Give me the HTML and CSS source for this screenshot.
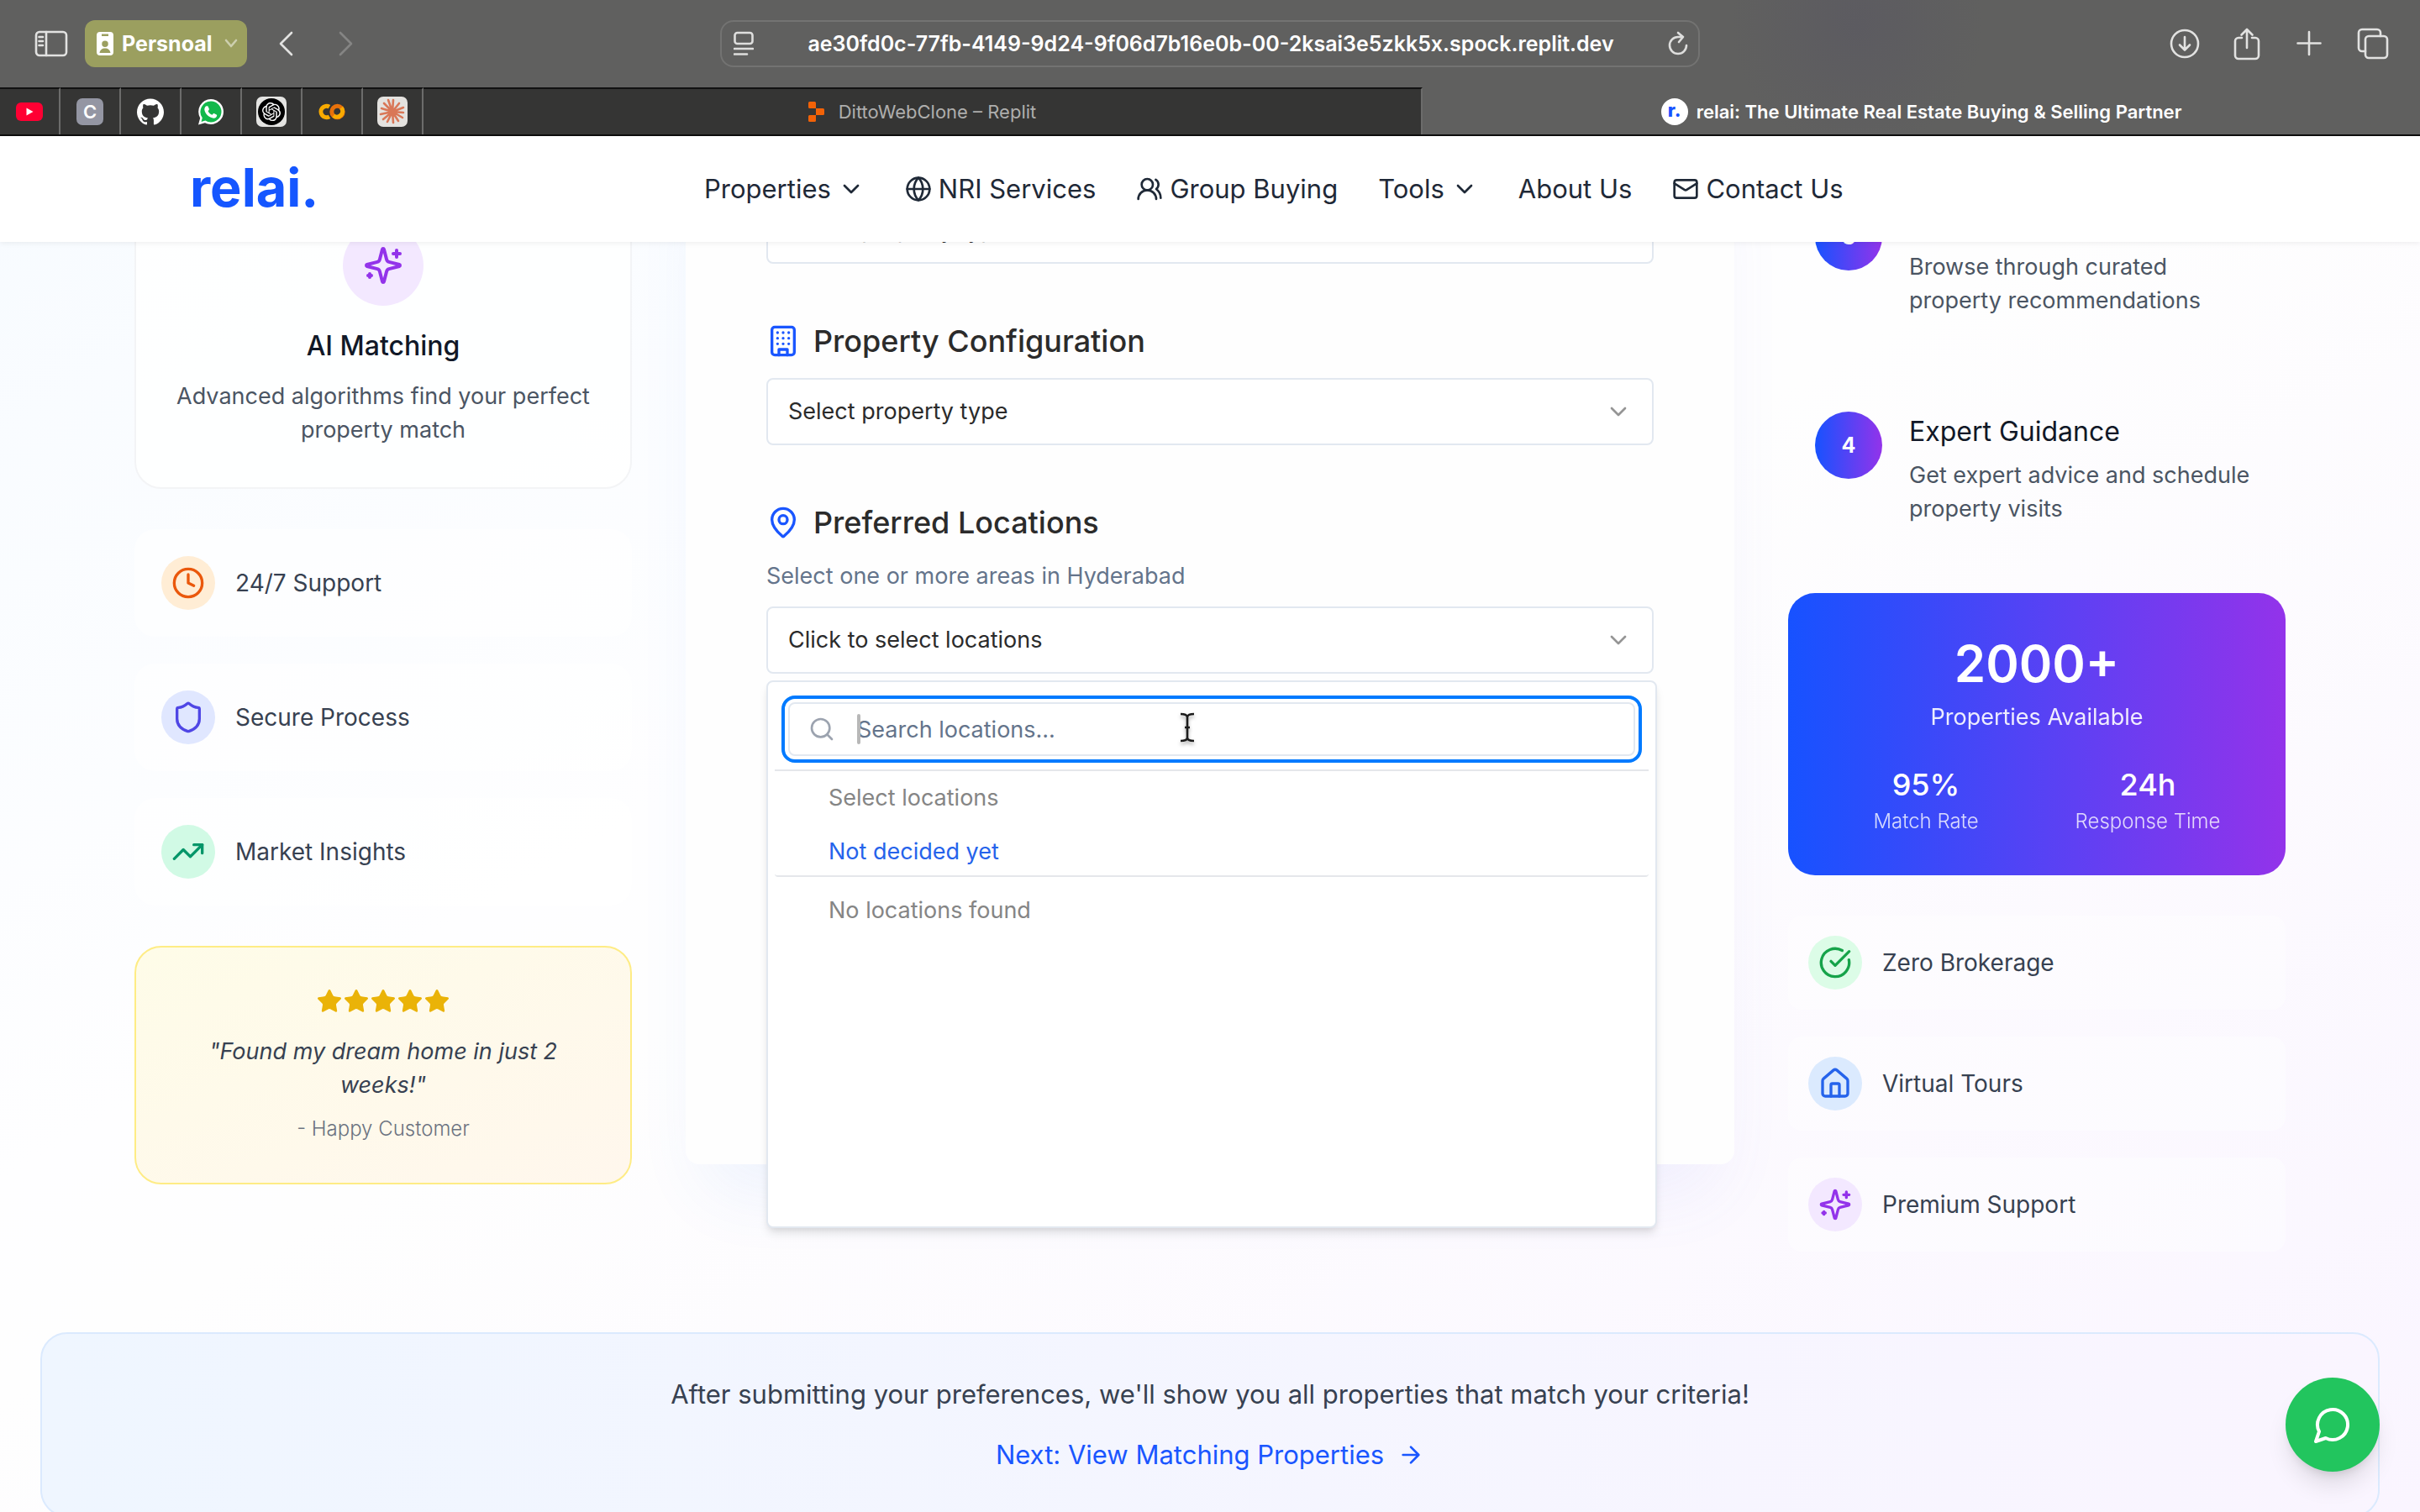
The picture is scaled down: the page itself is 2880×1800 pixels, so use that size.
FILE: index.html
```html
<!DOCTYPE html>
<html lang="en">
<head>
<meta charset="utf-8">
<title>relai: The Ultimate Real Estate Buying &amp; Selling Partner</title>
<link rel="stylesheet" href="styles.css">
</head>
<body>
<svg class="sprite" aria-hidden="true">
  <symbol id="chevron" viewBox="0 0 24 24"><path d="m6 9 6 6 6-6"/></symbol>
  <symbol id="sparkles" viewBox="0 0 24 24"><path d="M9.937 15.5A2 2 0 0 0 8.5 14.063l-6.135-1.582a.5.5 0 0 1 0-.962L8.5 9.936A2 2 0 0 0 9.937 8.5l1.582-6.135a.5.5 0 0 1 .963 0L14.063 8.5A2 2 0 0 0 15.5 9.937l6.135 1.581a.5.5 0 0 1 0 .964L15.5 14.063a2 2 0 0 0-1.437 1.437l-1.582 6.135a.5.5 0 0 1-.963 0z"/><path d="M20 3v4M22 5h-4M4 17v2M5 18H3"/></symbol>
  <symbol id="star" viewBox="0 0 24 24"><path d="M11.525 2.295a.53.53 0 0 1 .95 0l2.31 4.679a2.123 2.123 0 0 0 1.595 1.16l5.166.756a.53.53 0 0 1 .294.904l-3.736 3.638a2.123 2.123 0 0 0-.611 1.878l.882 5.14a.53.53 0 0 1-.771.56l-4.618-2.428a2.122 2.122 0 0 0-1.973 0L6.396 21.01a.53.53 0 0 1-.77-.56l.881-5.139a2.122 2.122 0 0 0-.611-1.879L2.16 9.795a.53.53 0 0 1 .294-.906l5.165-.755a2.122 2.122 0 0 0 1.597-1.16z"/></symbol>
</svg>

<div class="browser">
  <div class="toolbar">
    <div class="tools-left">
      <button class="tool" aria-label="Sidebar"><svg width="40" height="32" viewBox="0 0 40 32"><rect x="2" y="2" width="36" height="28" rx="4"/><path d="M14 2v28M5.500 8h4.500M5.500 13h4.500M5.500 18h4.500"/></svg></button>
      <button class="profile"><svg width="20" height="28" viewBox="0 0 20 28"><path fill="#fff" fill-rule="evenodd" d="M4 0h12a4 4 0 0 1 4 4v20a4 4 0 0 1-4 4H4a4 4 0 0 1-4-4V4a4 4 0 0 1 4-4zM6 2.500v2.500h8V2.500zM10 10.500a3.500 3.500 0 1 0 0 7.500 3.500 3.500 0 0 0 0-7.500zM3.500 25h13c-.5-3.500-3-5.500-6.500-5.500S4 21.500 3.500 25z"/></svg><span>Persnoal</span><svg class="profile-arrow" width="16" height="12" viewBox="0 0 16 12"><path d="m2 2 6 7 6-7"/></svg></button>
      <button class="tool back" aria-label="Back"><svg width="20" height="32" viewBox="0 0 20 32"><path d="M17 3 4 16l13 13"/></svg></button>
      <button class="tool forward" aria-label="Forward"><svg width="20" height="32" viewBox="0 0 20 32"><path d="m3 3 13 13L3 29"/></svg></button>
    </div>
    <div class="address">
      <svg width="24" height="30" viewBox="0 0 24 30"><rect x="1.500" y="2" width="21" height="13" rx="3"/><path d="M1 21h22M1 27.500h15"/></svg>
      <span>ae30fd0c-77fb-4149-9d24-9f06d7b16e0b-00-2ksai3e5zkk5x.spock.replit.dev</span>
      <svg width="24" height="32" viewBox="0 0 24 32"><path d="M22 18a10 10 0 1 1-10-10h5M12 3l6 5-5 6"/></svg>
    </div>
    <div class="tools-right">
      <button class="tool" aria-label="Downloads"><svg width="36" height="40" viewBox="0 0 36 40"><circle cx="18" cy="20" r="16"/><path d="M18 12v15M12 21.500l6 6 6-6"/></svg></button>
      <button class="tool" aria-label="Share"><svg width="36" height="40" viewBox="0 0 36 40"><path d="M12 13H8a4 4 0 0 0-4 4v17a4 4 0 0 0 4 4h20a4 4 0 0 0 4-4V17a4 4 0 0 0-4-4h-4M18 25V3M11.500 9.500 18 3l6.500 6.500"/></svg></button>
      <button class="tool" aria-label="New tab"><svg width="36" height="40" viewBox="0 0 36 40"><path d="M18 6v27M4.500 19.500h27"/></svg></button>
      <button class="tool" aria-label="Tab overview"><svg width="40" height="40" viewBox="0 0 40 40"><rect x="11" y="11" width="26" height="26" rx="4"/><path d="M11 29H7a4 4 0 0 1-4-4V7a4 4 0 0 1 4-4h18a4 4 0 0 1 4 4v4"/></svg></button>
    </div>
  </div>
  <div class="tabs">
    <div class="pinned"><svg width="32" height="24" viewBox="0 0 32 24"><rect width="32" height="22" y="1" rx="6" fill="#ff0033"/><path d="M12.500 7.500v9l8-4.500z" fill="#fff"/></svg></div>
    <div class="pinned"><span class="letter">C</span></div>
    <div class="pinned"><svg width="32" height="32" viewBox="0 0 24 24"><path fill="#fff" d="M12 .297c-6.630 0-12 5.373-12 12 0 5.303 3.438 9.800 8.205 11.385.6.113.82-.258.82-.577 0-.285-.01-1.040-.015-2.040-3.338.724-4.042-1.610-4.042-1.610C4.422 18.070 3.633 17.700 3.633 17.700c-1.087-.744.084-.729.084-.729 1.205.084 1.838 1.236 1.838 1.236 1.070 1.835 2.809 1.305 3.495.998.108-.776.417-1.305.76-1.605-2.665-.3-5.466-1.332-5.466-5.930 0-1.310.465-2.380 1.235-3.220-.135-.303-.54-1.523.105-3.176 0 0 1.005-.322 3.300 1.230.96-.267 1.980-.399 3-.405 1.020.006 2.040.138 3 .405 2.280-1.552 3.285-1.230 3.285-1.230.645 1.653.24 2.873.12 3.176.765.84 1.230 1.910 1.230 3.220 0 4.610-2.805 5.625-5.475 5.920.42.36.81 1.096.81 2.220 0 1.606-.015 2.896-.015 3.286 0 .315.21.69.825.57C20.565 22.092 24 17.592 24 12.297c0-6.627-5.373-12-12-12"/></svg></div>
    <div class="pinned"><svg width="32" height="32" viewBox="0 0 32 32"><path fill="#fff" d="M16 1a15 15 0 0 1 0 30c-2.500 0-4.900-.6-7-1.700L1 31.500l2.200-8A15 15 0 0 1 16 1z"/><path fill="#12b84b" d="M16 3.500a12.500 12.500 0 0 1 0 25c-2.400 0-4.700-.7-6.600-1.900l-4.900 1.400 1.300-4.800A12.500 12.500 0 0 1 16 3.500z"/><path fill="#fff" d="M11.500 9.200c.5 0 .9 0 1.200.8l1.200 2.800c.2.600-.1 1-1.300 2.500 1 2 2.600 3.500 4.900 4.500 1.200-1.500 1.600-2 2.300-1.700l2.800 1.400c.6.300.6.700.5 1.300-.4 1.900-2 3-3.800 2.900-5.500-.5-10.500-5.500-11-10.200-.1-1.900 1-3.800 2.300-4.300z"/></svg></div>
    <div class="pinned"><svg width="36" height="36" viewBox="0 0 36 36"><rect width="36" height="36" rx="7" fill="#e4e4e2"/><circle cx="18" cy="18" r="16" fill="#000"/><g transform="translate(7 7) scale(.92)"><path fill="#fff" d="M22.282 9.821a5.985 5.985 0 0 0-.516-4.911 6.046 6.046 0 0 0-6.510-2.900A6.065 6.065 0 0 0 4.981 4.182a5.985 5.985 0 0 0-3.998 2.900 6.046 6.046 0 0 0 .743 7.097 5.980 5.980 0 0 0 .511 4.911 6.051 6.051 0 0 0 6.515 2.900A5.985 5.985 0 0 0 13.260 24a6.056 6.056 0 0 0 5.772-4.206 5.989 5.989 0 0 0 3.998-2.900 6.056 6.056 0 0 0-.748-7.073zm-9.022 12.608a4.476 4.476 0 0 1-2.876-1.041l.142-.08 4.778-2.758a.795.795 0 0 0 .393-.681v-6.737l2.020 1.169a.071.071 0 0 1 .038.052v5.583a4.504 4.504 0 0 1-4.495 4.494zm-9.661-4.125a4.471 4.471 0 0 1-.535-3.014l.142.085 4.783 2.758a.771.771 0 0 0 .781 0l5.843-3.369v2.332a.08.08 0 0 1-.033.062L9.740 19.950a4.499 4.499 0 0 1-6.141-1.646zM2.341 7.896a4.485 4.485 0 0 1 2.366-1.973V11.600a.766.766 0 0 0 .388.677l5.814 3.354-2.020 1.169a.076.076 0 0 1-.071 0l-4.830-2.787A4.504 4.504 0 0 1 2.341 7.872zm16.596 3.856L13.104 8.364 15.119 7.200a.076.076 0 0 1 .071 0l4.830 2.791a4.494 4.494 0 0 1-.677 8.104v-5.677a.79.79 0 0 0-.407-.667zm2.011-3.023l-.142-.085-4.774-2.782a.776.776 0 0 0-.785 0L9.409 9.230V6.897a.066.066 0 0 1 .028-.062l4.830-2.787a4.499 4.499 0 0 1 6.680 4.660zM8.307 12.863l-2.020-1.164a.08.08 0 0 1-.038-.057V6.074a4.499 4.499 0 0 1 7.376-3.454l-.142.081L8.704 5.459a.795.795 0 0 0-.393.681zm1.098-2.365l2.602-1.500 2.607 1.500v2.999l-2.597 1.500-2.607-1.500z"/></g></svg></div>
    <div class="pinned"><svg width="32" height="20" viewBox="0 0 32 20" fill="none" stroke-width="5"><path stroke="#f9ab00" d="M13 4.200A6.700 6.700 0 1 0 13 15.800"/><circle stroke="#e8710a" cx="22.500" cy="10" r="6.700"/><path stroke="#f9ab00" d="M27.200 5.300a6.700 6.700 0 0 1-9.400 9.400"/></svg></div>
    <div class="pinned"><svg width="36" height="36" viewBox="0 0 36 36"><rect width="36" height="36" rx="7" fill="#e4e2df"/><path stroke="#d97757" stroke-width="2.600" stroke-linecap="round" d="M18 18 19 4M18 18l8-10M18 18l13-5M18 18l13 1M18 18l12 7M18 18l7 11M18 18l1 13M18 18l-6 12M18 18 7 27M18 18 4 21M18 18 5 14M18 18 8 8M18 18 13 4"/></svg></div>
    <div class="tab"><svg width="20" height="24" viewBox="0 0 20 24" fill="#f26207"><path d="M1.500 0h6A1.500 1.500 0 0 1 9 1.500V8H1.500A1.500 1.500 0 0 1 0 6.500v-5A1.500 1.500 0 0 1 1.500 0zM9 8h8.500A1.500 1.500 0 0 1 19 9.500v5a1.500 1.500 0 0 1-1.500 1.500H9zM1.500 16H9v6.500A1.500 1.500 0 0 1 7.500 24h-6A1.500 1.500 0 0 1 0 22.500v-5A1.500 1.500 0 0 1 1.500 16z"/></svg><span>DittoWebClone – Replit</span></div>
    <div class="tab active"><span class="favicon">r.</span><span>relai: The Ultimate Real Estate Buying &amp; Selling Partner</span></div>
  </div>
</div>

<div class="page">
  <header class="site-header">
    <a class="logo" href="#">relai.</a>
    <nav class="nav">
      <a href="#">Properties <svg class="icon"><use href="#chevron"/></svg></a>
      <a href="#"><svg class="icon" viewBox="0 0 24 24"><circle cx="12" cy="12" r="10"/><path d="M12 2a14.500 14.500 0 0 0 0 20 14.500 14.500 0 0 0 0-20M2 12h20"/></svg> NRI Services</a>
      <a href="#"><svg class="icon" viewBox="0 0 24 24"><path d="M18 21a8 8 0 0 0-16 0"/><circle cx="10" cy="8" r="5"/><path d="M22 20c0-3.370-2-6.500-4-8a5 5 0 0 0-.450-8.300"/></svg> Group Buying</a>
      <a href="#">Tools <svg class="icon"><use href="#chevron"/></svg></a>
      <a href="#">About Us</a>
      <a href="#"><svg class="icon" viewBox="0 0 24 24"><rect width="20" height="16" x="2" y="4" rx="2"/><path d="m22 7-8.970 5.700a1.940 1.940 0 0 1-2.060 0L2 7"/></svg> Contact Us</a>
    </nav>
  </header>

  <main class="content">
    <div class="columns">
      <aside class="side side-left">
        <section class="feature">
          <div class="badge badge-lg purple"><svg class="icon"><use href="#sparkles"/></svg></div>
          <h3>AI Matching</h3>
          <p>Advanced algorithms find your perfect property match</p>
        </section>
        <ul class="perks">
          <li><span class="badge orange"><svg class="icon" viewBox="0 0 24 24"><circle cx="12" cy="12" r="10"/><path d="M12 6v6l4 2"/></svg></span>24/7 Support</li>
          <li><span class="badge indigo"><svg class="icon" viewBox="0 0 24 24"><path d="M20 13c0 5-3.500 7.500-7.660 8.950a1 1 0 0 1-.670-.010C7.500 20.500 4 18 4 13V6a1 1 0 0 1 1-1c2 0 4.500-1.200 6.240-2.720a1.170 1.170 0 0 1 1.520 0C14.510 3.810 17 5 19 5a1 1 0 0 1 1 1z"/></svg></span>Secure Process</li>
          <li><span class="badge emerald"><svg class="icon" viewBox="0 0 24 24"><path d="m22 7-8.500 8.500-5-5L2 17"/><path d="M16 7h6v6"/></svg></span>Market Insights</li>
        </ul>
        <figure class="quote">
          <div class="stars"><svg><use href="#star"/></svg><svg><use href="#star"/></svg><svg><use href="#star"/></svg><svg><use href="#star"/></svg><svg><use href="#star"/></svg></div>
          <blockquote>"Found my dream home in just 2 weeks!"</blockquote>
          <figcaption>- Happy Customer</figcaption>
        </figure>
      </aside>

      <form class="form-card">
        <div class="field">
          <div class="select"><select aria-label="Property type"><option>Select property type</option></select><svg class="icon"><use href="#chevron"/></svg></div>
        </div>
        <div class="field">
          <label class="field-title" for="configuration"><svg class="icon" viewBox="0 0 24 24"><rect width="16" height="20" x="4" y="2" rx="2"/><path d="M9 22v-4h6v4M8 6h.010M16 6h.010M12 6h.010M12 10h.010M12 14h.010M16 10h.010M16 14h.010M8 10h.010M8 14h.010"/></svg>Property Configuration</label>
          <div class="select"><select id="configuration"><option>Select property type</option></select><svg class="icon"><use href="#chevron"/></svg></div>
        </div>
        <div class="field">
          <label class="field-title" for="locations"><svg class="icon" viewBox="0 0 24 24"><path d="M20 10c0 4.993-5.539 10.193-7.399 11.799a1 1 0 0 1-1.202 0C9.539 20.193 4 14.993 4 10a8 8 0 0 1 16 0"/><circle cx="12" cy="10" r="3"/></svg>Preferred Locations</label>
          <p class="hint">Select one or more areas in Hyderabad</p>
          <div class="select">
            <select id="locations"><option>Click to select locations</option></select><svg class="icon"><use href="#chevron"/></svg>
            <div class="menu">
              <div class="search">
                <svg class="icon" viewBox="0 0 24 24"><circle cx="11" cy="11" r="8"/><path d="m21 21-4.300-4.300"/></svg>
                <input type="text" placeholder="Search locations..." aria-label="Search locations">
                <span class="caret"></span>
                <svg class="pointer" width="20" height="36" viewBox="0 0 20 36"><path d="M2 2c5 0 8 1 8 4 0-3 3-4 8-4M10 5v26M2 34c5 0 8-1 8-4 0 3 3 4 8 4M7 18h6"/></svg>
              </div>
              <ul class="options">
                <li>Select locations</li>
                <li class="undecided">Not decided yet</li>
                <li class="none">No locations found</li>
              </ul>
            </div>
          </div>
        </div>
      </form>

      <aside class="side">
        <ol class="steps">
          <li><span class="number">3</span><div><h3>Browse Matches</h3><p>Browse through curated property recommendations</p></div></li>
          <li><span class="number">4</span><div><h3>Expert Guidance</h3><p>Get expert advice and schedule property visits</p></div></li>
        </ol>
        <section class="stats">
          <strong>2000+</strong>
          <p>Properties Available</p>
          <dl>
            <div><dd>95%</dd><dt>Match Rate</dt></div>
            <div><dd>24h</dd><dt>Response Time</dt></div>
          </dl>
        </section>
        <ul class="perks compact">
          <li><span class="badge green"><svg class="icon" viewBox="0 0 24 24"><path d="M21.801 10A10 10 0 1 1 17 3.335"/><path d="m9 11 3 3L22 4"/></svg></span>Zero Brokerage</li>
          <li><span class="badge blue"><svg class="icon" viewBox="0 0 24 24"><path d="M15 21v-8a1 1 0 0 0-1-1h-4a1 1 0 0 0-1 1v8"/><path d="M3 10a2 2 0 0 1 .709-1.528l7-5.999a2 2 0 0 1 2.582 0l7 5.999A2 2 0 0 1 21 10v9a2 2 0 0 1-2 2H5a2 2 0 0 1-2-2z"/></svg></span>Virtual Tours</li>
          <li><span class="badge purple"><svg class="icon"><use href="#sparkles"/></svg></span>Premium Support</li>
        </ul>
      </aside>
    </div>

    <section class="next">
      <p>After submitting your preferences, we'll show you all properties that match your criteria!</p>
      <a href="#">Next: View Matching Properties <svg class="icon" viewBox="0 0 24 24"><path d="M5 12h14M12 5l7 7-7 7"/></svg></a>
    </section>
  </main>
  <button class="chat" aria-label="Chat"><svg class="icon" viewBox="0 0 24 24"><path d="M7.900 20A9 9 0 1 0 4 16.100L2 22Z"/></svg></button>
</div>
</body>
</html>
```
FILE: styles.css
```css
* { box-sizing: border-box; margin: 0; padding: 0; }
body {
  display: flex;
  flex-direction: column;
  height: 100vh;
  overflow: hidden;
  font-family: Inter, "Noto Sans", sans-serif;
  font-size: 27px;
  font-weight: 400;
  line-height: 40px;
  color: #374151;
}
ul, ol { list-style: none; }
a { color: inherit; text-decoration: none; }
button, input, select { font: inherit; color: inherit; border: 0; background: none; }
.sprite { position: absolute; width: 0; height: 0; }
.icon {
  width: 32px;
  height: 32px;
  flex: none;
  fill: none;
  stroke: currentColor;
  stroke-width: 2;
  stroke-linecap: round;
  stroke-linejoin: round;
}

/* Browser chrome */
.browser {
  flex: none;
  border-bottom: 2px solid #0c0c0c;
  background: radial-gradient(circle at 2210px 30px, #58566280 0, #58566200 150px), #60605f;
}
.toolbar {
  display: grid;
  grid-template-columns: 1fr 1166px 1fr;
  align-items: center;
  height: 104px;
  color: #e2e2e1;
}
.toolbar svg { display: block; fill: none; stroke: currentColor; stroke-width: 2.6; stroke-linecap: round; stroke-linejoin: round; }
.tools-left { display: flex; align-items: center; padding-left: 41px; }
.profile {
  display: flex;
  align-items: center;
  gap: 10px;
  height: 56px;
  width: 193px;
  margin: 0 36px 0 20px;
  padding-left: 14px;
  border-radius: 12px;
  background: #9b9f5f;
  color: #fff;
  font-size: 25px;
  font-weight: 700;
}
.toolbar .profile svg { stroke: none; }
.toolbar .profile .profile-arrow { stroke: #cdcfae; margin-left: 4px; }
.back { margin-right: 52px; }
.forward { color: #858584; }
.address {
  display: flex;
  align-items: center;
  justify-content: space-between;
  height: 56px;
  padding: 0 12px 0 14px;
  border: 2px solid #737372;
  border-radius: 16px;
  color: #fff;
  font-size: 25px;
  font-weight: 600;
}
.address svg { color: #dededd; }
.tools-right { display: flex; justify-content: flex-end; gap: 38px; padding-right: 36px; }
.tabs { display: flex; height: 56px; font-size: 22px; }
.pinned, .tab {
  display: flex;
  align-items: center;
  justify-content: center;
  border-top: 2px solid #111;
  border-right: 2px solid #6c6c6b;
  background: #353534;
}
.pinned { width: 72px; flex: none; }
.tab { flex: 1; color: #aeaead; gap: 16px; }
.tab.active { border-color: transparent; border-right: 0; background: none; color: #fff; font-weight: 600; gap: 10px; }
.letter {
  width: 32px;
  height: 32px;
  border-radius: 7px;
  background: #9496a3;
  color: #fff;
  font-size: 22px;
  font-weight: 600;
  line-height: 32px;
  text-align: center;
}
.favicon {
  width: 32px;
  height: 32px;
  border-radius: 50%;
  background: #fff;
  color: #1752ff;
  font-size: 22px;
  font-weight: 800;
  line-height: 28px;
  text-align: center;
}

/* Page */
.page {
  position: relative;
  flex: 1;
  overflow: hidden;
  background: linear-gradient(to bottom right, #f7fbff 0%, #fefeff 38%, #fefefe 46%, #faf5ff 100%);
}
.site-header {
  position: relative;
  z-index: 5;
  display: grid;
  grid-template-columns: 612px 1fr;
  align-items: center;
  height: 126px;
  padding-left: 226px;
  background: #fff;
  box-shadow: 0 2px 6px #0000000f;
}
.logo { padding-bottom: 4px; color: #1556ff; font-size: 63px; font-weight: 700; line-height: 80px; }
.nav { display: flex; gap: 48px; color: #1f2937; font-size: 31px; line-height: 48px; }
.nav a { display: flex; align-items: center; gap: 8px; }
.content { margin-top: -78px; }
.columns {
  display: grid;
  grid-template-columns: minmax(0, 592fr) minmax(0, 1248fr) minmax(0, 592fr);
  gap: 64px;
  padding: 0 160px;
  align-items: start;
}
.side { display: flex; flex-direction: column; gap: 48px; }
.side-left { padding-top: 8px; }
h3 { color: #111827; font-size: 32px; font-weight: 400; line-height: 48px; }
.feature {
  padding: 48px;
  border: 2px solid #f3f4f6;
  border-radius: 32px;
  background: #ffffffcc;
  color: #4b5563;
  text-align: center;
}
.feature h3 { margin: 24px 0 16px; font-weight: 500; }
.badge {
  display: flex;
  align-items: center;
  justify-content: center;
  width: 64px;
  height: 64px;
  flex: none;
  border-radius: 50%;
}
.badge .icon { width: 40px; height: 40px; }
.badge-lg { width: 96px; height: 96px; margin: 0 auto; }
.badge-lg .icon { width: 48px; height: 48px; }
.purple { background: #f3e8ff; color: #9333ea; }
.orange { background: #ffedd5; color: #ea580c; }
.indigo { background: #e0e7ff; color: #4f46e5; }
.emerald { background: #d1fae5; color: #059669; }
.green { background: #dcfce7; color: #16a34a; }
.blue { background: #dbeafe; color: #2563eb; }
.perks { display: flex; flex-direction: column; gap: 32px; font-size: 28px; }
.perks li {
  display: flex;
  align-items: center;
  gap: 24px;
  padding: 32px;
  border-radius: 24px;
  background: #ffffff80;
}
.perks.compact li { padding: 24px; border-radius: 16px; background: #ffffff66; }
.quote {
  padding: 48px;
  border: 2px solid #feec85;
  border-radius: 32px;
  background: linear-gradient(to bottom right, #fefce8, #fff7ed);
  text-align: center;
}
.stars { display: flex; justify-content: center; margin-bottom: 24px; }
.stars svg { width: 32px; height: 32px; fill: #eab308; stroke: #eab308; stroke-width: 1; }
blockquote { font-style: italic; }
figcaption { margin-top: 16px; color: #6b7280; font-size: 24px; font-weight: 300; line-height: 32px; }

/* Preferences form */
.form-card {
  position: relative;
  z-index: 1;
  display: flex;
  flex-direction: column;
  gap: 64px;
  padding: 24px 96px 584px;
}
.form-card::before {
  content: "";
  position: absolute;
  z-index: -2;
  inset: 0 16px -40px;
  border-radius: 48px;
  background: linear-gradient(to right, #3b82f6, #6366f1);
  filter: blur(40px);
  opacity: .07;
}
.form-card::after {
  content: "";
  position: absolute;
  z-index: -1;
  inset: 0;
  border-radius: 16px;
  background: #fefefe;
}
.field { display: flex; flex-direction: column; gap: 16px; }
.field-title {
  display: flex;
  align-items: center;
  gap: 16px;
  color: #2b2b2b;
  font-size: 36px;
  font-weight: 500;
  line-height: 56px;
}
.field-title .icon { width: 40px; height: 40px; color: #1a56ff; }
.hint { color: #64748b; }
.select { position: relative; color: #2b2b2b; }
.select select {
  display: block;
  appearance: none;
  width: 100%;
  height: 80px;
  padding: 0 24px;
  border: 2px solid #e2e8f0;
  border-radius: 8px;
  background: #fff;
}
.select > .icon { position: absolute; right: 26px; top: 24px; color: #959595; }
.menu {
  position: absolute;
  top: 88px;
  left: 0;
  right: -4px;
  height: 652px;
  padding: 8px;
  border: 2px solid #e2e8f0;
  border-radius: 8px;
  background: #fff;
  box-shadow: 0 8px 12px -2px #0000001a, 0 4px 8px -4px #0000001a;
}
.search { position: relative; padding: 16px; border-bottom: 2px solid #e5e7eb; }
.search .icon { position: absolute; left: 40px; top: 32px; color: #9ca3af; }
.search input {
  display: block;
  width: 100%;
  height: 64px;
  padding: 0 24px 0 80px;
  border: 2px solid #e2e8f0;
  border-radius: 8px;
  outline: 4px solid #007aff;
  outline-offset: 4px;
}
.search input::placeholder { color: #64748b; opacity: 1; }
.caret { position: absolute; left: 98px; top: 30px; width: 4px; height: 36px; border-radius: 2px; background: #b8b8b8; }
.pointer {
  position: absolute;
  left: 481px;
  top: 28px;
  fill: none;
  stroke: #1c1c1c;
  stroke-width: 2.6;
  filter: drop-shadow(0 3px 2px #00000055);
}
.options li { padding: 12px 64px; color: #858585; }
.options .undecided { padding-bottom: 8px; border-bottom: 2px solid #e5e7eb; border-radius: 4px; color: #2563eb; }
.options .none { padding-top: 20px; }

/* Steps and stats */
.steps { display: flex; flex-direction: column; gap: 48px; }
.steps li { display: flex; gap: 32px; padding: 32px; }
.steps p { margin-top: 8px; color: #4b5563; }
.number {
  width: 80px;
  height: 80px;
  flex: none;
  border-radius: 50%;
  background: linear-gradient(to right, #1752ff, #9333ea);
  color: #fff;
  font-size: 25px;
  font-weight: 700;
  line-height: 80px;
  text-align: center;
}
.stats {
  padding: 48px;
  border-radius: 32px;
  background: linear-gradient(to right, #1752ff, #9333ea);
  color: #fff;
  text-align: center;
}
.stats strong { display: block; margin-bottom: 8px; font-size: 60px; font-weight: 600; line-height: 72px; }
.stats p { opacity: .9; }
.stats dl { display: grid; grid-template-columns: 1fr 1fr; gap: 32px; margin-top: 32px; }
.stats dd { font-size: 36px; font-weight: 500; line-height: 56px; }
.stats dt { font-size: 24px; font-weight: 300; line-height: 32px; opacity: .8; }

.next {
  display: flex;
  flex-direction: column;
  align-items: center;
  gap: 24px;
  margin: 96px 48px 0;
  padding: 48px;
  border: 2px solid #dbeafe;
  border-radius: 32px;
  background: linear-gradient(to right, #eff6ff, #faf5ff);
  font-size: 31px;
  line-height: 48px;
}
.next a { display: flex; align-items: center; gap: 16px; color: #1a56ff; }
.chat {
  position: absolute;
  right: 48px;
  bottom: 48px;
  z-index: 6;
  display: flex;
  align-items: center;
  justify-content: center;
  width: 112px;
  height: 112px;
  border-radius: 50%;
  background: #22c55e;
  color: #fff;
  box-shadow: 0 20px 30px -6px #0000001f, 0 8px 12px -6px #0000001f;
}
.chat .icon { width: 48px; height: 48px; }
```
